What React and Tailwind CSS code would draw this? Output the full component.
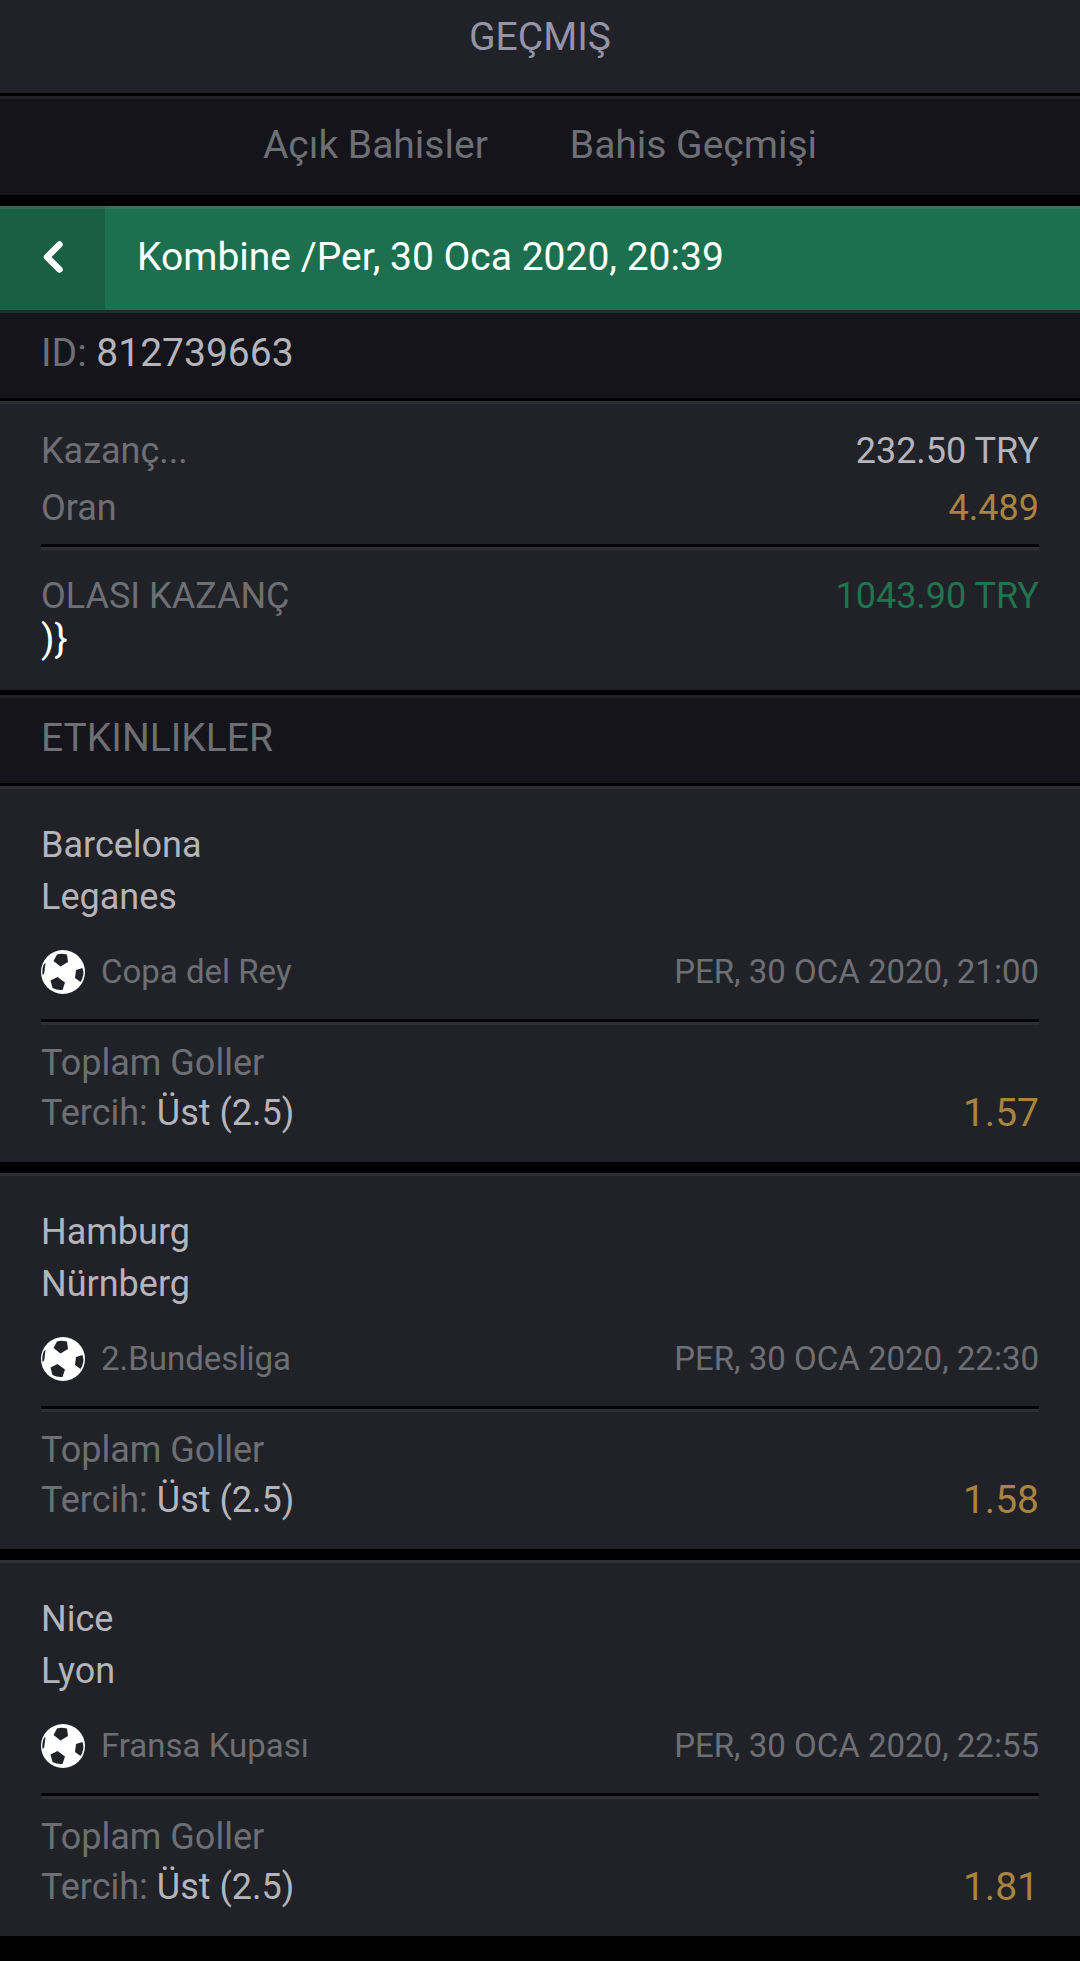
const events = [
    { home: 'Barcelona', away: 'Leganes', league: 'Copa del Rey', date: 'PER, 30 OCA 2020, 21:00', market: 'Toplam Goller', pick: 'Üst (2.5)', odds: '1.57' },
    { home: 'Hamburg', away: 'Nürnberg', league: '2.Bundesliga', date: 'PER, 30 OCA 2020, 22:30', market: 'Toplam Goller', pick: 'Üst (2.5)', odds: '1.58' },
    { home: 'Nice', away: 'Lyon', league: 'Fransa Kupası', date: 'PER, 30 OCA 2020, 22:55', market: 'Toplam Goller', pick: 'Üst (2.5)', odds: '1.81' },
];

const FootballIcon = () => (
    <svg viewBox="0 0 44 44" className="w-11 h-11 shrink-0" aria-hidden="true">
        <circle cx="22" cy="22" r="22" fill="#ffffff" />
        <g fill="#212227">
            <path d="M16 4.5 Q20 3 26 4.5 L27 12 L19.5 16.5 L12.5 11 Z" />
            <path d="M41.5 18 Q44 25 39.5 32 L34 28 L35 20 Z" />
            <path d="M16.5 27 L24 32.5 L21.5 40 Q16 40.5 11.5 38 L9.5 30.5 Z" />
            <path d="M3 14 L4.5 13 L3.2 23.5 L1.5 25 Q0.8 18.5 3 14 Z" />
        </g>
    </svg>
);

const Divider = () => <div className="h-1.5 border-t-[3px] border-t-[#050509] bg-[#2f2e34]" />;

const SummaryRow = ({ label, value, valueClass }) => (
    <div className="flex justify-between text-4xl leading-[57px]">
        <dt className="text-[#6e6f74]">{label}</dt>
        <dd className={valueClass}>{value}</dd>
    </div>
);

const SectionTitle = ({ children }) => (
    <h2 className="border-t-[3px] border-[#222127] bg-[#15141a] px-[41px] pb-1 text-[39px] leading-[81px] text-[#6e6f74]">{children}</h2>
);

const EventCard = ({ event }) => (
    <li className="border-t-[3px] border-[#2f2e35] bg-[#212227] px-[41px] pt-[30px] pb-6">
        <p className="text-4xl leading-[52px] text-[#b4b4ba]">{event.home}</p>
        <p className="text-4xl leading-[52px] text-[#b4b4ba]">{event.away}</p>
        <div className="flex items-center justify-between pt-[27px] pb-[25px] text-[33px] leading-[44px] text-[#6e6f74]">
            <div className="flex items-center gap-4">
                <FootballIcon />
                <span>{event.league}</span>
            </div>
            <time>{event.date}</time>
        </div>
        <Divider />
        <p className="pt-[13px] text-4xl leading-[50px] text-[#6e6f74]">{event.market}</p>
        <div className="flex items-center justify-between leading-[50px]">
            <p className="text-4xl leading-[50px] text-[#6e6f74]">
                Tercih: <span className="text-[#b4b4ba]">{event.pick}</span>
            </p>
            <span className="text-[39px] text-[#a98440]">{event.odds}</span>
        </div>
    </li>
);

const App = () => {
    return (
        <div className="min-h-screen bg-black font-['Roboto',sans-serif]">
            <header className="bg-[#212227] pb-[19px]">
                <h1 className="text-center text-[39px] leading-[74px] text-[#9594a6]">GEÇMIŞ</h1>
            </header>

            <nav className="mt-[3px] flex justify-center gap-[82px] border-t-[3px] border-[#222127] bg-[#15141a] pb-1 text-[39px] leading-[92px] text-[#6e6f74]">
                <button type="button">Açık Bahisler</button>
                <button type="button">Bahis Geçmişi</button>
            </nav>

            <main className="pt-[11px]">
                <div className="flex border-b-[3px] border-[#1d2f2c]">
                    <button type="button" aria-label="Geri" className="flex w-[105px] items-center justify-center border-t-[3px] border-[#316754] bg-[#185f44] pb-1.5">
                        <svg viewBox="0 0 20 32" className="h-8 w-5" fill="none" stroke="#ffffff" strokeWidth="6.5" strokeLinecap="round" strokeLinejoin="round">
                            <path d="M16.5 3.5 L4 16 L16.5 28.5" />
                        </svg>
                    </button>
                    <h2 className="flex-1 border-t-[3px] border-[#2f7558] bg-[#1c7050] px-8 pb-1 text-[39px] leading-[97px] text-white">
                        Kombine /Per, 30 Oca 2020, 20:39
                    </h2>
                </div>

                <p className="bg-[#15141a] px-[41px] pb-1 text-[39px] leading-[81px] text-[#6e6f74]">
                    ID: <span className="text-[#b4b4ba]">812739663</span>
                </p>

                <section className="mt-[3px] border-t-[3px] border-[#2f2e35] bg-[#212227] px-[41px] pt-[19px] pb-9">
                    <dl>
                        <SummaryRow label="Kazanç..." value="232.50 TRY" valueClass="text-[#b4b4ba]" />
                        <SummaryRow label="Oran" value="4.489" valueClass="text-[#a98440]" />
                    </dl>
                    <div className="pt-[7px] pb-[18px]">
                        <Divider />
                    </div>
                    <dl>
                        <SummaryRow label="OLASI KAZANÇ" value="1043.90 TRY" valueClass="text-[#22734f]" />
                    </dl>
                    <p className="text-[39px] leading-[29px] text-white">{')}'}</p>
                </section>

                <div className="mt-[5px]">
                    <SectionTitle>ETKINLIKLER</SectionTitle>
                </div>

                <ul className="mt-[3px] space-y-[11px]">
                    {events.map((event) => (
                        <EventCard key={event.home} event={event} />
                    ))}
                </ul>
            </main>
        </div>
    );
};

export default App;
